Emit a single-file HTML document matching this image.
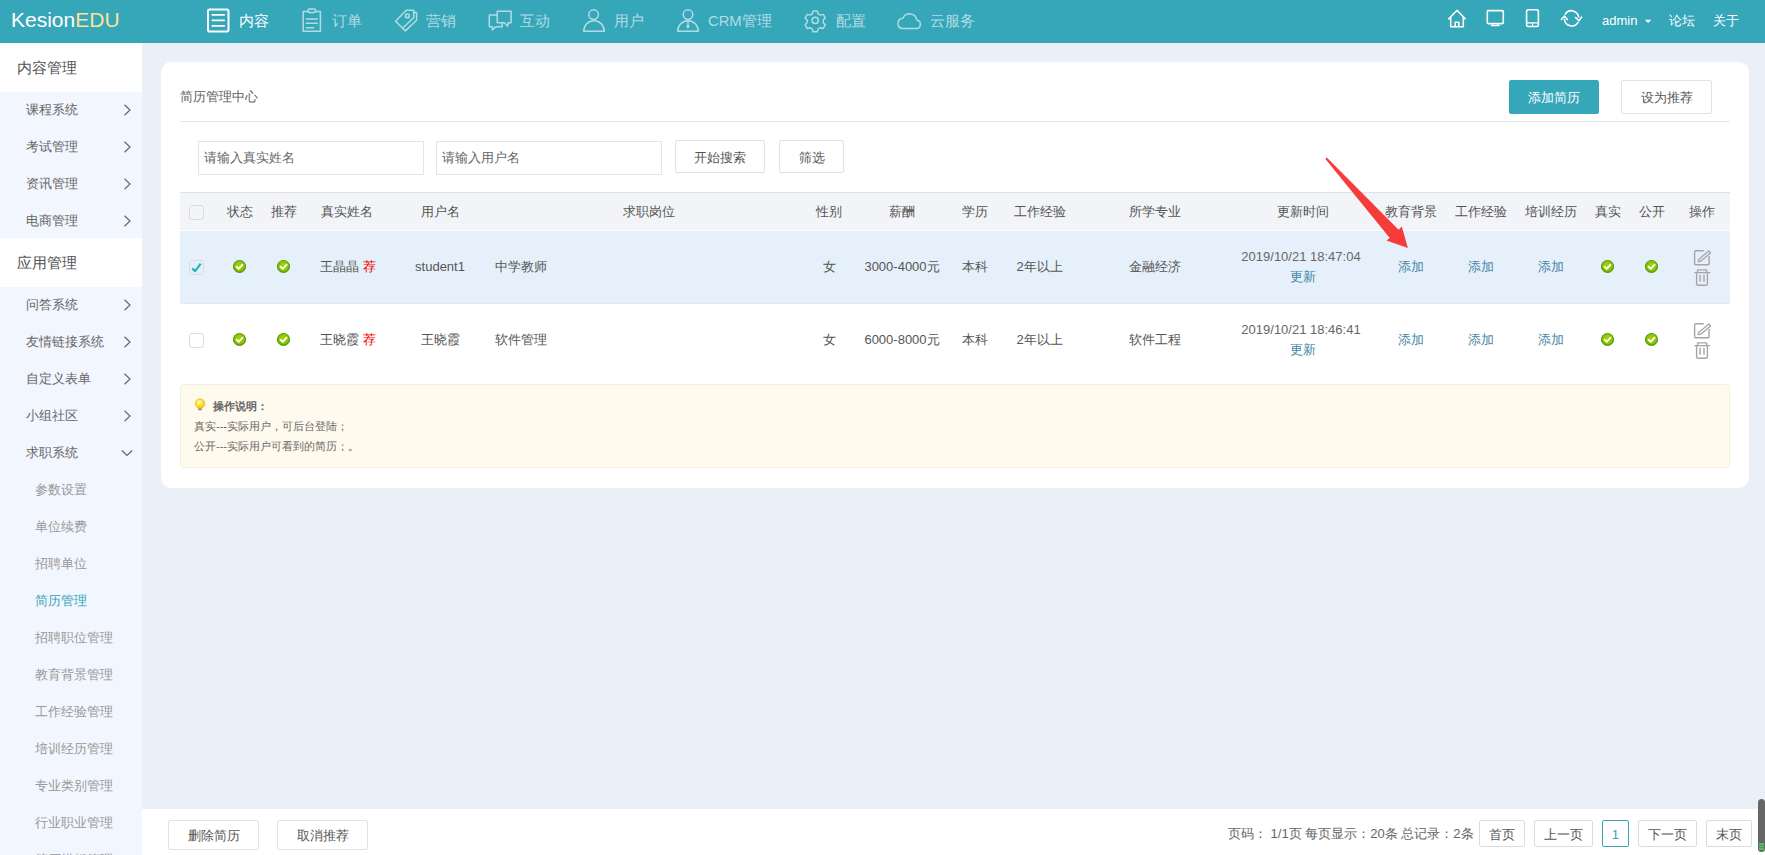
<!DOCTYPE html>
<html><head><meta charset="utf-8">
<style>
*{margin:0;padding:0;box-sizing:border-box}
html,body{width:1765px;height:855px;overflow:hidden}
body{position:relative;background:#ebeff8;font-family:"Liberation Sans",sans-serif;font-size:13px;color:#555}
.a{position:absolute;white-space:nowrap}
#top{position:absolute;left:0;top:0;width:1765px;height:43px;background:#36a6b9}
#top svg{position:absolute;overflow:visible}
.nt{position:absolute;top:11.5px;font-size:14.8px;line-height:18px;color:#b2dce3}
.nt.on{color:#fff}
.rt{position:absolute;top:12px;font-size:13px;line-height:18px;color:#fff}
#side{position:absolute;left:0;top:43px;width:142px;height:812px;background:#f2f6fe}
.sh{position:absolute;left:0;width:142px;height:49px;background:#fff;font-size:15px;color:#555;padding-left:17px;line-height:49px}
.si{position:absolute;left:26px;font-size:13px;color:#666;line-height:18px}
.ss{position:absolute;left:35px;font-size:13px;color:#999;line-height:18px}
.arr{position:absolute;left:123px;width:9px;height:12px}
#card{position:absolute;left:161px;top:62px;width:1588px;height:426px;background:#fff;border-radius:10px}
.btn{position:absolute;height:34px;border:1px solid #dde3e6;border-radius:2px;background:#fff;text-align:center;line-height:33px;font-size:13px;color:#555}
.inp{position:absolute;height:34px;border:1px solid #dfe6e8;background:#fff;line-height:32px;padding-left:5px;font-size:13px;color:#666}
.th{position:absolute;top:204px;line-height:16px;font-size:13px;color:#555;text-align:center}
.td{position:absolute;line-height:16px;font-size:13px;color:#555;text-align:center}
.ok{position:absolute;width:13px;height:13px}
.cb{position:absolute;width:15px;height:15px;border:1px solid #d9dde2;border-radius:3px}
#bot{position:absolute;left:142px;top:809px;width:1623px;height:46px;background:#fff}
.pg{position:absolute;top:820px;height:27px;border:1px solid #d8dde0;border-radius:2px;background:#fff;text-align:center;line-height:27px;font-size:13px;color:#555}
</style></head><body>

<svg width="0" height="0" style="position:absolute"><defs><radialGradient id="okG" cx="0.5" cy="0.45" r="0.55"><stop offset="0" stop-color="#a8d80a"/><stop offset="0.7" stop-color="#8cc400"/><stop offset="1" stop-color="#4e9800"/></radialGradient>
<g id="okI"><circle cx="6.5" cy="6.5" r="6.1" fill="url(#okG)" stroke="#3f8a00" stroke-width="0.8"/><path d="M3.5 6.6L5.7 8.8L9.6 4.6" fill="none" stroke="#fff" stroke-width="1.8" stroke-linecap="round" stroke-linejoin="round"/></g></defs></svg>
<div id="top">
  <div class="a" id="logo" style="left:11px;top:7px;font-size:21px;line-height:26px;color:#fff">Kesion<span style="color:#fbe49a">EDU</span></div>
  <svg width="1765" height="43" style="left:0;top:0" fill="none" stroke-linecap="round" stroke-linejoin="round">
    <g stroke="#fff" stroke-width="2">
      <rect x="208" y="9.6" width="20.5" height="22" rx="1.8"/>
      <path d="M212.3 14.8H224.2M212.3 20.3H224.2M212.3 25.9H224.2" stroke-width="1.7"/>
    </g>
    <g stroke="#b2dce3" stroke-width="1.5">
      <path d="M308 11.5H303.2V31.3H320.4V11.5H315.6"/>
      <rect x="308.2" y="9" width="7.3" height="3.6" rx="1"/>
      <path d="M306.3 19H317.2M306.3 23.3H317.2M306.3 27.7H313.8"/>
      <path d="M395.6 21.3L406.3 10.2H413.8V12.5H416.6V20.3L405.3 30.9Z"/>
      <path d="M413.8 12.5V17.5L403.6 27.2"/>
      <circle cx="407.4" cy="15.9" r="1.9"/>
      <path d="M497.2 11.3H511.1V22.8H508.2L507.7 26.1L504.4 22.8H497.2Z"/>
      <path d="M497.2 15.1H489.3V26.8H492.4V29.9L495.9 26.8H502.2V22.8"/>
      <circle cx="593.6" cy="14.6" r="4.8"/>
      <path d="M583.7 31.3A10.3 10.6 0 0 1 604.3 31.3Z"/>
      <circle cx="688" cy="14.6" r="4.8"/>
      <path d="M677.7 31.3A10.3 10.6 0 0 1 698.3 31.3Z"/>
      <path d="M688 19.6V24.8" stroke-width="1.3"/><path d="M686.4 26.4L688 24.6L689.6 26.4L688 28Z" fill="#b2dce3" stroke-width="0.8"/>
      <path transform="translate(815.2 20.5) scale(0.9) translate(-815.2 -20.5)" stroke-width="1.65" id="gear" d="M812.9 9.9h4.6l0.9 3.1l2.6 1.5l3.1-0.8l2.3 4l-2.2 2.3v3l2.2 2.3l-2.3 4l-3.1-0.8l-2.6 1.5l-0.9 3.1h-4.6l-0.9-3.1l-2.6-1.5l-3.1 0.8l-2.3-4l2.2-2.3v-3l-2.2-2.3l2.3-4l3.1 0.8l2.6-1.5z"/>
      <circle cx="815.2" cy="20.4" r="3.1"/>
      <path d="M902.3 28.6H916.3A4.4 4.4 0 0 0 916.8 19.9A7.3 7.3 0 0 0 902.9 18.3A5.2 5.2 0 0 0 902.3 28.6Z"/>
    </g>
    <g stroke="#fff" stroke-width="1.6">
      <path d="M1448.8 18.8L1457 10.3L1465.2 18.8M1450.7 17V26.8H1463.3V17M1455.2 26.8V22.2H1458.8V26.8"/>
      <rect x="1487.3" y="10.6" width="16" height="13" rx="1.2"/>
      <path d="M1491.3 25.6H1499.3M1493 23.8V25.6M1497.6 23.8V25.6" stroke-width="1.3"/>
      <rect x="1526.6" y="9.8" width="11.8" height="16.7" rx="1.6"/>
      <path d="M1526.6 22.8H1538.4M1532.5 22.8V26.5" stroke-width="1.2"/>
      <path d="M1565.2 14.1A7.3 7.3 0 0 1 1578.6 17.2M1578 22.4A7.3 7.3 0 0 1 1564.5 19.6"/>
      <path d="M1575.6 17.6L1579 20.8L1581.6 17" stroke-width="1.5"/>
      <path d="M1561.4 19.5L1564.4 16L1567.4 19.4" stroke-width="1.5"/>
      <path d="M1644.8 19.7H1651.4L1648.1 23Z" fill="#fff" stroke="none"/>
    </g>
  </svg>
  <div class="nt on" style="left:239px">内容</div>
  <div class="nt" style="left:332px">订单</div>
  <div class="nt" style="left:426px">营销</div>
  <div class="nt" style="left:520px">互动</div>
  <div class="nt" style="left:614px">用户</div>
  <div class="nt" style="left:708px">CRM管理</div>
  <div class="nt" style="left:836px">配置</div>
  <div class="nt" style="left:930px">云服务</div>
  <div class="rt" style="left:1602px">admin</div>
  <div class="rt" style="left:1669px">论坛</div>
  <div class="rt" style="left:1713px">关于</div>
</div>

<div id="side">
  <div class="sh" style="top:0">内容管理</div>
  <div class="si" style="top:58px">课程系统</div><svg class="arr" style="top:61px" viewBox="0 0 9 12" fill="none" stroke="#666" stroke-width="1.2"><path d="M1.5 0.8L7 6L1.5 11.2"/></svg>
  <div class="si" style="top:95px">考试管理</div><svg class="arr" style="top:98px" viewBox="0 0 9 12" fill="none" stroke="#666" stroke-width="1.2"><path d="M1.5 0.8L7 6L1.5 11.2"/></svg>
  <div class="si" style="top:132px">资讯管理</div><svg class="arr" style="top:135px" viewBox="0 0 9 12" fill="none" stroke="#666" stroke-width="1.2"><path d="M1.5 0.8L7 6L1.5 11.2"/></svg>
  <div class="si" style="top:169px">电商管理</div><svg class="arr" style="top:172px" viewBox="0 0 9 12" fill="none" stroke="#666" stroke-width="1.2"><path d="M1.5 0.8L7 6L1.5 11.2"/></svg>
  <div class="sh" style="top:195px">应用管理</div>
  <div class="si" style="top:253px">问答系统</div><svg class="arr" style="top:256px" viewBox="0 0 9 12" fill="none" stroke="#666" stroke-width="1.2"><path d="M1.5 0.8L7 6L1.5 11.2"/></svg>
  <div class="si" style="top:290px">友情链接系统</div><svg class="arr" style="top:293px" viewBox="0 0 9 12" fill="none" stroke="#666" stroke-width="1.2"><path d="M1.5 0.8L7 6L1.5 11.2"/></svg>
  <div class="si" style="top:327px">自定义表单</div><svg class="arr" style="top:330px" viewBox="0 0 9 12" fill="none" stroke="#666" stroke-width="1.2"><path d="M1.5 0.8L7 6L1.5 11.2"/></svg>
  <div class="si" style="top:364px">小组社区</div><svg class="arr" style="top:367px" viewBox="0 0 9 12" fill="none" stroke="#666" stroke-width="1.2"><path d="M1.5 0.8L7 6L1.5 11.2"/></svg>
  <div class="si" style="top:401px">求职系统</div><svg class="arr" style="top:406px;left:121px;width:12px;height:8px" viewBox="0 0 12 8" fill="none" stroke="#666" stroke-width="1.2"><path d="M0.8 1.5L6 6.5L11.2 1.5"/></svg>
  <div class="ss" style="top:438px">参数设置</div>
  <div class="ss" style="top:475px">单位续费</div>
  <div class="ss" style="top:512px">招聘单位</div>
  <div class="ss" style="top:549px;color:#36a6b9">简历管理</div>
  <div class="ss" style="top:586px">招聘职位管理</div>
  <div class="ss" style="top:623px">教育背景管理</div>
  <div class="ss" style="top:660px">工作经验管理</div>
  <div class="ss" style="top:697px">培训经历管理</div>
  <div class="ss" style="top:734px">专业类别管理</div>
  <div class="ss" style="top:771px">行业职业管理</div>
  <div class="ss" style="top:808px">简历模板管理</div>
</div>

<div id="card"></div>
<div class="a" style="left:180px;top:89px;font-size:13px;line-height:16px;color:#606060">简历管理中心</div>
<div class="btn" style="left:1509px;top:80px;width:90px;background:#36a6b9;border-color:#36a6b9;color:#fff">添加简历</div>
<div class="btn" style="left:1621px;top:80px;width:91px">设为推荐</div>
<div class="a" style="left:180px;top:121px;width:1550px;height:1px;background:#e2e7ea"></div>
<div class="inp" style="left:198px;top:141px;width:226px">请输入真实姓名</div>
<div class="inp" style="left:436px;top:141px;width:226px">请输入用户名</div>
<div class="btn" style="left:675px;top:140px;width:90px;height:33px">开始搜索</div>
<div class="btn" style="left:779px;top:140px;width:65px;height:33px">筛选</div>
<div class="a" style="left:180px;top:192px;width:1550px;height:38px;background:#f2f4f7;border-top:1px solid #dde2e6"></div>
<div class="a" style="left:180px;top:231px;width:1550px;height:73px;background:#e6f0fa;border-bottom:1px solid #e4e9ee"></div>
<div class="cb" style="left:189px;top:205px"></div>
<div class="th" style="left:180px;width:120px">状态</div>
<div class="th" style="left:224px;width:120px">推荐</div>
<div class="th" style="left:287px;width:120px">真实姓名</div>
<div class="th" style="left:380px;width:120px">用户名</div>
<div class="th" style="left:588.5px;width:120px">求职岗位</div>
<div class="th" style="left:768.5px;width:120px">性别</div>
<div class="th" style="left:841.7px;width:120px">薪酬</div>
<div class="th" style="left:915px;width:120px">学历</div>
<div class="th" style="left:979.5px;width:120px">工作经验</div>
<div class="th" style="left:1095px;width:120px">所学专业</div>
<div class="th" style="left:1242.5px;width:120px">更新时间</div>
<div class="th" style="left:1351px;width:120px">教育背景</div>
<div class="th" style="left:1421px;width:120px">工作经验</div>
<div class="th" style="left:1491px;width:120px">培训经历</div>
<div class="th" style="left:1548px;width:120px">真实</div>
<div class="th" style="left:1592px;width:120px">公开</div>
<div class="th" style="left:1642px;width:120px">操作</div>
<div class="cb" style="left:189px;top:260px"><svg style="position:absolute;left:-1px;top:-1px" width="15" height="15" viewBox="0 0 15 15"><path d="M3.2 8.3L6.1 11.1L11.7 3.6" fill="none" stroke="#29b6aa" stroke-width="2.3" stroke-linejoin="round"/></svg></div>
<svg class="ok" style="left:233px;top:260px" viewBox="0 0 13 13"><use href="#okI"/></svg>
<svg class="ok" style="left:277px;top:260px" viewBox="0 0 13 13"><use href="#okI"/></svg>
<div class="td" style="left:288px;width:120px;top:259px">王晶晶 <span style="color:#f40000">荐</span></div>
<div class="td" style="left:380px;width:120px;top:259px">student1</div>
<div class="td" style="left:495px;top:259px;text-align:left">中学教师</div>
<div class="td" style="left:789px;width:80px;top:259px">女</div>
<div class="td" style="left:842px;width:120px;top:259px">3000-4000元</div>
<div class="td" style="left:935px;width:80px;top:259px">本科</div>
<div class="td" style="left:979.5px;width:120px;top:259px">2年以上</div>
<div class="td" style="left:1095px;width:120px;top:259px">金融经济</div>
<div class="td" style="left:1221px;width:160px;top:247px;line-height:20px;color:#666">2019/10/21 18:47:04<br><span style="color:#3f84a6;position:relative;left:1.5px">更新</span></div>
<div class="td" style="left:1371px;width:80px;top:259px;color:#4b86a6">添加</div>
<div class="td" style="left:1441px;width:80px;top:259px;color:#4b86a6">添加</div>
<div class="td" style="left:1511px;width:80px;top:259px;color:#4b86a6">添加</div>
<svg class="ok" style="left:1601px;top:260px" viewBox="0 0 13 13"><use href="#okI"/></svg>
<svg class="ok" style="left:1645px;top:260px" viewBox="0 0 13 13"><use href="#okI"/></svg>
<svg class="a" style="left:1693px;top:249px" width="18" height="17" viewBox="0 0 18 17" fill="none" stroke="#a5a5a5" stroke-width="1.4" stroke-linejoin="round"><path d="M10.8 1.7H2.7A1.1 1.1 0 0 0 1.6 2.8V14.7A1.1 1.1 0 0 0 2.7 15.8H15A1.1 1.1 0 0 0 16.1 14.7V7"/><path d="M5.2 12.6L5.9 10.2L15.9 1.9L17.6 4L7.6 12.3Z" stroke-width="1.3"/></svg>
<svg class="a" style="left:1694px;top:268px" width="17" height="19" viewBox="0 0 17 19" fill="none" stroke="#a5a5a5" stroke-width="1.4" stroke-linejoin="round"><path d="M0.3 4.6H16.2M3.6 4.6V1.9H12.6V4.6M2.6 4.6V16A1.2 1.2 0 0 0 3.8 17.2H12.2A1.2 1.2 0 0 0 13.4 16V4.6M6.1 6.8V13.8M10 6.8V13.8"/></svg>
<div class="cb" style="left:189px;top:333px"></div>
<svg class="ok" style="left:233px;top:333px" viewBox="0 0 13 13"><use href="#okI"/></svg>
<svg class="ok" style="left:277px;top:333px" viewBox="0 0 13 13"><use href="#okI"/></svg>
<div class="td" style="left:288px;width:120px;top:332px">王晓霞 <span style="color:#f40000">荐</span></div>
<div class="td" style="left:380px;width:120px;top:332px">王晓霞</div>
<div class="td" style="left:495px;top:332px;text-align:left">软件管理</div>
<div class="td" style="left:789px;width:80px;top:332px">女</div>
<div class="td" style="left:842px;width:120px;top:332px">6000-8000元</div>
<div class="td" style="left:935px;width:80px;top:332px">本科</div>
<div class="td" style="left:979.5px;width:120px;top:332px">2年以上</div>
<div class="td" style="left:1095px;width:120px;top:332px">软件工程</div>
<div class="td" style="left:1221px;width:160px;top:320px;line-height:20px;color:#666">2019/10/21 18:46:41<br><span style="color:#3f84a6;position:relative;left:1.5px">更新</span></div>
<div class="td" style="left:1371px;width:80px;top:332px;color:#4b86a6">添加</div>
<div class="td" style="left:1441px;width:80px;top:332px;color:#4b86a6">添加</div>
<div class="td" style="left:1511px;width:80px;top:332px;color:#4b86a6">添加</div>
<svg class="ok" style="left:1601px;top:333px" viewBox="0 0 13 13"><use href="#okI"/></svg>
<svg class="ok" style="left:1645px;top:333px" viewBox="0 0 13 13"><use href="#okI"/></svg>
<svg class="a" style="left:1693px;top:322px" width="18" height="17" viewBox="0 0 18 17" fill="none" stroke="#a5a5a5" stroke-width="1.4" stroke-linejoin="round"><path d="M10.8 1.7H2.7A1.1 1.1 0 0 0 1.6 2.8V14.7A1.1 1.1 0 0 0 2.7 15.8H15A1.1 1.1 0 0 0 16.1 14.7V7"/><path d="M5.2 12.6L5.9 10.2L15.9 1.9L17.6 4L7.6 12.3Z" stroke-width="1.3"/></svg>
<svg class="a" style="left:1694px;top:341px" width="17" height="19" viewBox="0 0 17 19" fill="none" stroke="#a5a5a5" stroke-width="1.4" stroke-linejoin="round"><path d="M0.3 4.6H16.2M3.6 4.6V1.9H12.6V4.6M2.6 4.6V16A1.2 1.2 0 0 0 3.8 17.2H12.2A1.2 1.2 0 0 0 13.4 16V4.6M6.1 6.8V13.8M10 6.8V13.8"/></svg>
<div class="a" style="left:180px;top:384px;width:1550px;height:84px;background:#fffaee;border:1px solid #f7efdb;border-radius:4px"></div>
<svg class="a" style="left:194px;top:398px" width="12" height="14" viewBox="0 0 12 14"><defs><radialGradient id="bulb" cx="0.4" cy="0.35" r="0.7"><stop offset="0" stop-color="#fffbd0"/><stop offset="0.5" stop-color="#fbe330"/><stop offset="1" stop-color="#f5c000"/></radialGradient></defs><rect x="4.1" y="9.6" width="3.8" height="3" rx="1" fill="#9a9a9a"/><circle cx="6" cy="5.6" r="4.8" fill="url(#bulb)" stroke="#f2a900" stroke-width="0.6"/></svg>
<div class="a" style="left:213px;top:398px;font-size:11px;line-height:16px;color:#666;font-weight:bold">操作说明：</div>
<div class="a" style="left:194px;top:418px;font-size:11px;line-height:16px;color:#666">真实---实际用户，可后台登陆；</div>
<div class="a" style="left:194px;top:438px;font-size:11px;line-height:16px;color:#666">公开---实际用户可看到的简历；。</div>
<div id="bot"></div>
<div class="btn" style="left:168px;top:820px;width:91px;height:30px;line-height:29px">删除简历</div>
<div class="btn" style="left:277px;top:820px;width:91px;height:30px;line-height:29px">取消推荐</div>
<div class="a" style="left:1228px;top:826px;font-size:13px;line-height:16px;color:#666">页码： 1/1页 每页显示：20条 总记录：2条</div>
<div class="pg" style="left:1478.5px;width:46.0px;">首页</div>
<div class="pg" style="left:1534px;width:58.5px;">上一页</div>
<div class="pg" style="left:1602px;width:26.5px;border-color:#36a6b9;color:#36a6b9">1</div>
<div class="pg" style="left:1638px;width:58.5px;">下一页</div>
<div class="pg" style="left:1706px;width:45.5px;">末页</div>
<div class="a" style="left:1758px;top:799px;width:7px;height:53px;background:#666;border-radius:3.5px"></div><div class="a" style="left:1759px;top:843px;width:5px;height:1.5px;background:#4ec35a;box-shadow:0 2.5px 0 #4ec35a,0 5px 0 #4ec35a"></div>

<svg class="a" style="left:0;top:0" width="1765" height="855"><path d="M1325.4 158.9L1326.8 157.6L1398.6 229.8L1401.8 226.4L1407.9 248L1386.4 240.6L1389.8 237.9Z" fill="#f73b3b"/></svg>
</body></html>
